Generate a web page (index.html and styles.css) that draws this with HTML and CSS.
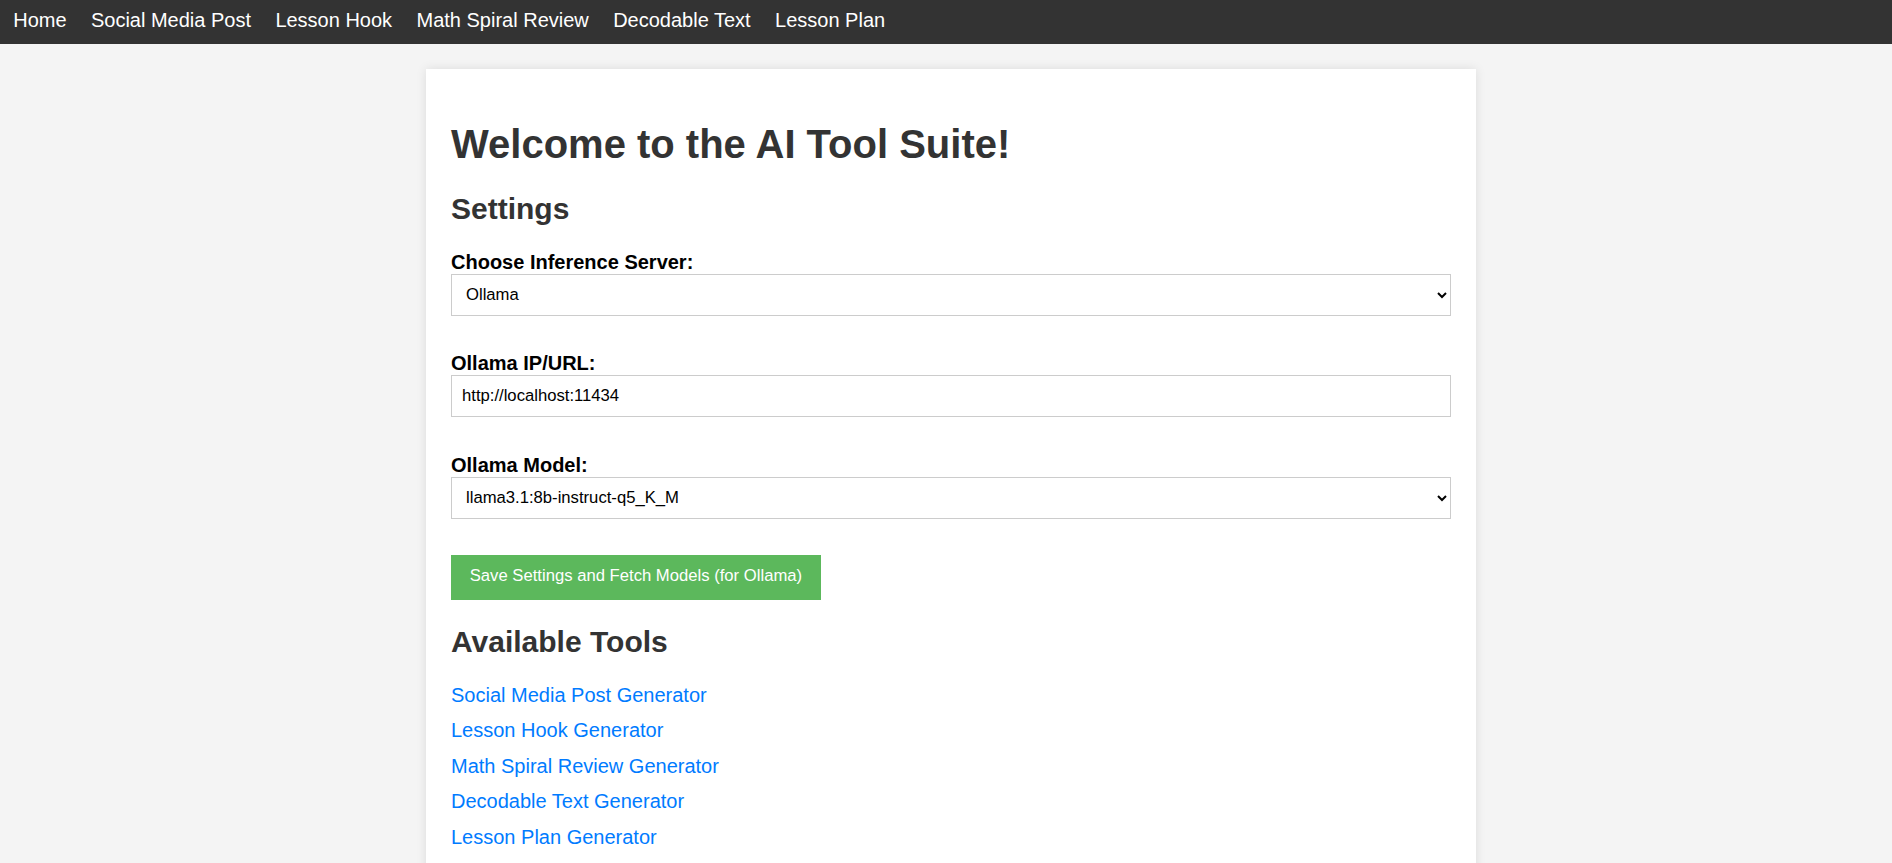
FILE: index.html
```html
<!DOCTYPE html>
<html lang="en">
<head>
<meta charset="utf-8">
<title>AI Tool Suite</title>
<link rel="stylesheet" href="styles.css">
</head>
<body>
<nav class="topnav">
  <a href="#" class="nav-link">Home</a>
  <a href="#" class="nav-link">Social Media Post</a>
  <a href="#" class="nav-link">Lesson Hook</a>
  <a href="#" class="nav-link">Math Spiral Review</a>
  <a href="#" class="nav-link">Decodable Text</a>
  <a href="#" class="nav-link">Lesson Plan</a>
</nav>
<main class="page">
  <div class="card">
    <h1 class="title">Welcome to the AI Tool Suite!</h1>
    <h2 class="section-title">Settings</h2>
    <div class="field">
      <label class="field-label" for="server">Choose Inference Server:</label>
      <select id="server" class="control control-select">
        <option>Ollama</option>
      </select>
    </div>
    <div class="field">
      <label class="field-label" for="url">Ollama IP/URL:</label>
      <input id="url" class="control" type="text" value="http://localhost:11434">
    </div>
    <div class="field">
      <label class="field-label" for="model">Ollama Model:</label>
      <select id="model" class="control control-select">
        <option>llama3.1:8b-instruct-q5_K_M</option>
      </select>
    </div>
    <button class="save-btn" type="button">Save Settings and Fetch Models (for Ollama)</button>
    <h2 class="section-title">Available Tools</h2>
    <ul class="tool-list">
      <li class="tool-item"><a href="#" class="tool-link">Social Media Post Generator</a></li>
      <li class="tool-item"><a href="#" class="tool-link">Lesson Hook Generator</a></li>
      <li class="tool-item"><a href="#" class="tool-link">Math Spiral Review Generator</a></li>
      <li class="tool-item"><a href="#" class="tool-link">Decodable Text Generator</a></li>
      <li class="tool-item"><a href="#" class="tool-link">Lesson Plan Generator</a></li>
    </ul>
  </div>
</main>
</body>
</html>
```
FILE: styles.css
```css
html, body {
  margin: 0;
  padding: 0;
}
body {
  background: #f4f4f4;
  font-family: "Liberation Sans", Arial, sans-serif;
  font-size: 20px;
  color: #333;
}
.topnav {
  display: flex;
  background: #333;
  padding: 9px 0 12px 1px;
}
.nav-link {
  color: #fff;
  text-decoration: none;
  font-size: 20px;
  line-height: 23px;
  padding: 0 12.2px;
}
.page {
  padding: 25px 0 0 10px;
}
.card {
  max-width: 1000px;
  margin: 0 auto;
  padding: 25px;
  background: #fff;
  box-shadow: 0 0 10px rgba(0, 0, 0, 0.1);
}
.title {
  font-size: 40px;
  line-height: 46px;
  margin: 26.8px 0 25.5px;
  color: #333;
}
.section-title {
  font-size: 30px;
  line-height: 34.5px;
  margin: 25px 0 24px;
  color: #333;
}
.field {
  margin-bottom: 36.5px;
}
.field-label {
  display: block;
  font-weight: bold;
  font-size: 20px;
  line-height: 23px;
  color: #000;
}
.control {
  display: block;
  width: 100%;
  box-sizing: border-box;
  height: 42px;
  padding: 0 10px;
  border: 1px solid #ccc;
  border-radius: 0;
  background: #fff;
  color: #000;
  font-family: "Liberation Sans", Arial, sans-serif;
  font-size: 16.67px;
  margin: 0;
}
.control-select {
  padding: 0 8px 0 10px;
}
.save-btn {
  display: block;
  background: #5cb85c;
  color: #fff;
  border: none;
  border-radius: 0;
  font-family: "Liberation Sans", Arial, sans-serif;
  font-size: 16.67px;
  line-height: 20px;
  padding: 11px 18.75px 14px;
  margin: 0;
}
.tool-list {
  list-style: none;
  padding: 0;
  margin: 0;
}
.tool-item {
  font-size: 20px;
  line-height: 23px;
  margin-bottom: 12.5px;
}
.tool-link {
  color: #007bff;
  text-decoration: none;
}
```
